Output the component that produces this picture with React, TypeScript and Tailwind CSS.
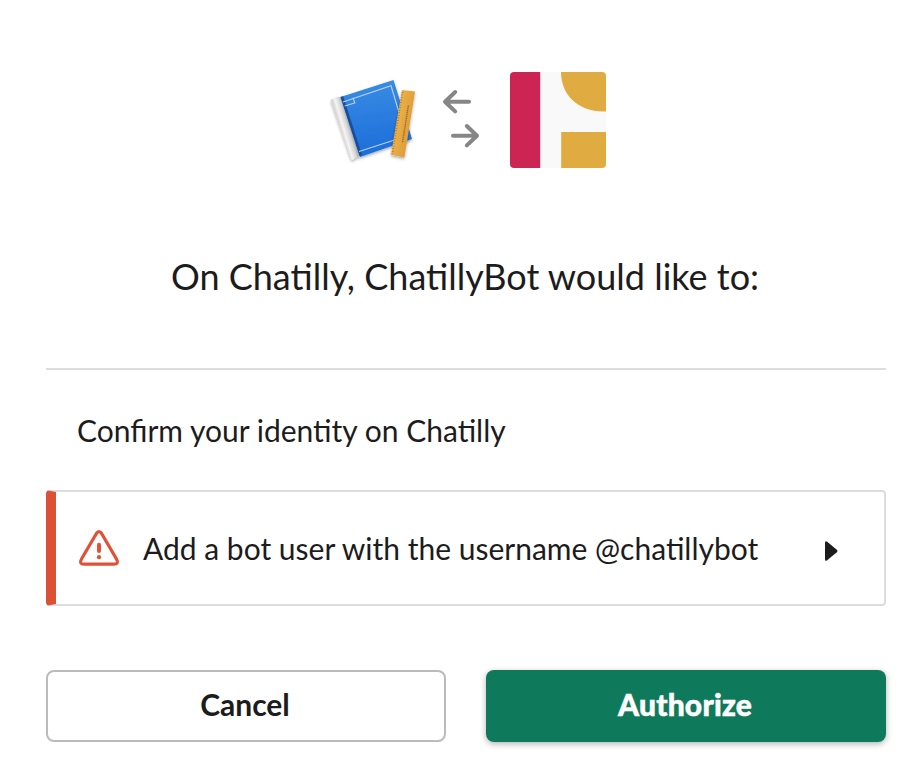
function NotebookLogo() {
  return (
    <svg className="size-24" viewBox="0 0 96 96" fill="none">
      <defs>
        <linearGradient id="cover" x1="50" y1="10" x2="58" y2="84" gradientUnits="userSpaceOnUse">
          <stop stopColor="#388be3" />
          <stop offset="1" stopColor="#1c6cd9" />
        </linearGradient>
        <linearGradient id="spine" x1="13" y1="54" x2="23" y2="51" gradientUnits="userSpaceOnUse">
          <stop stopColor="#d0d0d0" />
          <stop offset="0.35" stopColor="#f4f4f4" />
          <stop offset="0.75" stopColor="#d4d4d4" />
          <stop offset="1" stopColor="#ababab" />
        </linearGradient>
        <linearGradient id="ruler" x1="72" y1="50" x2="83" y2="52" gradientUnits="userSpaceOnUse">
          <stop stopColor="#e9ae49" />
          <stop offset="1" stopColor="#dfa03a" />
        </linearGradient>
        <filter id="drop" x="-20%" y="-20%" width="140%" height="140%">
          <feDropShadow dx="0" dy="1.5" stdDeviation="1.5" floodColor="#000" floodOpacity="0.35" />
        </filter>
      </defs>
      <g filter="url(#drop)">
        <path d="M14.5 25 67.5 8 86 67 34 85Z" fill="url(#cover)" />
        <path d="M5.6 27.4Q9.6 24.8 14.6 25L33.5 84.2Q29 85 27 87.8 25.6 88.3 25 86.8L5.1 29Q4.8 28 5.6 27.4Z" fill="url(#spine)" />
      </g>
      <path d="M14.5 25 17.2 24.2 36 83 33.5 84Z" fill="#164f9e" />
      <path d="M17 30 65 13.8 79.5 62M33 79.5 68.5 68M18.8 34 28.8 31 27 25.8" stroke="#b4d3f6" strokeWidth="1.1" />
      <g filter="url(#drop)">
        <path d="M76 18 89 19.5 78.4 85.4 65 82.8Z" fill="url(#ruler)" />
      </g>
      <path d="M76.6 20 66.2 82" stroke="#9b6c27" strokeWidth="1.8" strokeDasharray="0.6 2" />
      <path d="M82.4 33.5 76.4 71" stroke="#9c6b2b" strokeWidth="1.4" strokeDasharray="1.4 0.7" />
    </svg>
  );
}

function ExchangeArrows() {
  return (
    <svg className="h-24 w-10" viewBox="0 0 40 96" fill="none" stroke="#868686" strokeWidth="4" strokeLinecap="round" strokeLinejoin="round">
      <path d="M29 29.7H5M15.2 20 5 29.7 15.2 39.4" />
      <path d="M13 63.7H37M26.8 54 37 63.7 26.8 73.4" />
    </svg>
  );
}

function WorkspaceLogo() {
  return (
    <svg className="size-24 rounded" viewBox="0 0 96 96">
      <path d="M0 0H96V96H0Z" fill="#f9f9f9" />
      <path d="M0 0H30.2V96H0Z" fill="#cc2554" />
      <path d="M51 0H96V39.5H94C67 39.5 51 22 51 0ZM51.2 60H96V96H51.2Z" fill="#e0ac42" />
    </svg>
  );
}

export default function App() {
  return (
    <main className="flex h-[774px] w-[920px] flex-col bg-white pr-[34px] pl-[46px] font-[Lato,sans-serif] text-[#1d1c1d]">
      <div className="flex items-center pt-[72px] pl-[280px]">
        <NotebookLogo />
        <div className="mr-[30px] ml-[18px]">
          <ExchangeArrows />
        </div>
        <WorkspaceLogo />
      </div>
      <h1 className="mt-[84px] pr-[2px] text-center text-[36px] leading-[48px]">On Chatilly, ChatillyBot would like to:</h1>
      <hr className="mt-[68px] border-t-2 border-[#dddddd]" />
      <p className="mt-[38px] pl-[31px] text-[30px] leading-[44px]">Confirm your identity on Chatilly</p>
      <button className="mt-[38px] flex h-[116px] items-center rounded border-2 border-l-[10px] border-[#dddddd] border-l-[#dc5135] pr-[46px] pl-[22px] text-left text-[30px] leading-[44px]">
        <svg className="mt-1 h-[44px] w-[42px] shrink-0" viewBox="0 0 42 44" fill="none" stroke="#e05137" strokeWidth="3.2" strokeLinecap="round" strokeLinejoin="round">
          <path d="M18.4 5.5 3.5 31C1.6 34.4 2.5 36.2 6 36.2H36C39.5 36.2 40.4 34.4 38.5 31L23.6 5.5Q21 1.6 18.4 5.5Z" />
          <path d="M21 16.8V23" strokeWidth="4" />
          <circle cx="21" cy="29.2" r="2.1" fill="#e05137" stroke="none" />
        </svg>
        <span className="ml-[23px] flex-1 whitespace-nowrap">Add a bot user with the username @chatillybot</span>
        <svg className="mt-[6px] h-[20px] w-[13px]" viewBox="0 0 13 20" fill="#1d1c1d">
          <path d="M0 1.8Q0-.8 2.2.7L11.8 8.8Q13.1 10 11.8 11.2L2.2 19.3Q0 20.8 0 18.2Z" />
        </svg>
      </button>
      <div className="mt-16 grid grid-cols-2 gap-10">
        <button className="h-[72px] rounded-lg border-2 border-[#bbbbbb] pr-0.5 pb-1 text-[30px] leading-none font-bold">Cancel</button>
        <button className="h-[72px] rounded-lg bg-[#0f7a5b] pr-0.5 pb-1 text-[30px] leading-none font-black tracking-[0.2px] text-white shadow-[0_2px_6px_rgba(0,0,0,0.3)] [-webkit-text-stroke:0.5px_white]">Authorize</button>
      </div>
    </main>
  );
}
